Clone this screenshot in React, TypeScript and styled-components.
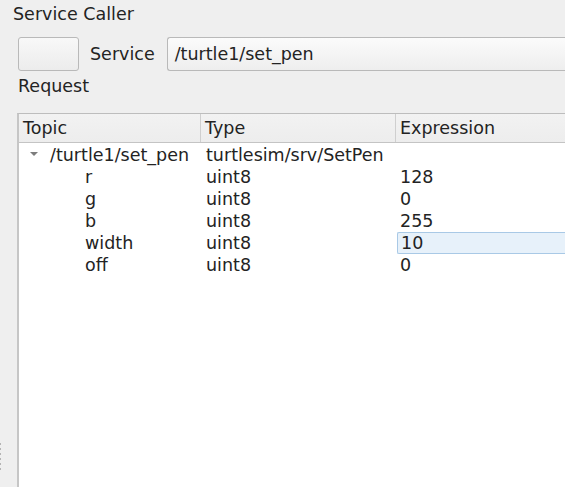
import React from "react";
import styled, {createGlobalStyle} from "styled-components";

const GlobalStyle = createGlobalStyle`
    html, body {
        margin: 0;
        padding: 0;
        background: #efefef;
        overflow: hidden;
    }
    body {
        font-family: "DejaVu Sans", "Liberation Sans", sans-serif;
        font-size: 17.5px;
        color: #232323;
    }
`;

type Row = {
    topic: string;
    type: string;
    expr: string;
    depth: number;
    editing?: boolean;
};

const rows: Row[] = [
    {topic: "/turtle1/set_pen", type: "turtlesim/srv/SetPen", expr: "", depth: 0},
    {topic: "r", type: "uint8", expr: "128", depth: 1},
    {topic: "g", type: "uint8", expr: "0", depth: 1},
    {topic: "b", type: "uint8", expr: "255", depth: 1},
    {topic: "width", type: "uint8", expr: "10", depth: 1, editing: true},
    {topic: "off", type: "uint8", expr: "0", depth: 1},
];

const App = () => {
    return (
        <>
            <GlobalStyle/>
            <Page>
                <Handle>
                    {[0, 1, 2, 3, 4, 5].map(i => <Dot key={i}/>)}
                </Handle>
                <Content>
                    <Title>Service Caller</Title>
                    <Body>
                        <ServiceRow>
                            <CallButton/>
                            <Label>Service</Label>
                            <Combo>/turtle1/set_pen</Combo>
                        </ServiceRow>
                        <Label>Request</Label>
                        <Table>
                            <Header>
                                <HeadCell>Topic</HeadCell>
                                <HeadCell>Type</HeadCell>
                                <HeadCell $last>Expression</HeadCell>
                            </Header>
                            <Rows>
                                {rows.map(r => (
                                    <TreeRow key={r.topic}>
                                        <TopicCell $depth={r.depth}>
                                            {r.depth === 0 && <Arrow/>}
                                            {r.topic}
                                        </TopicCell>
                                        <Cell>{r.type}</Cell>
                                        <ExprCell $editing={r.editing}>{r.expr}</ExprCell>
                                    </TreeRow>
                                ))}
                            </Rows>
                        </Table>
                    </Body>
                </Content>
            </Page>
        </>
    );
};

const Page = styled.div`
    display: flex;
    width: 100%;
    height: 487px;
    overflow: hidden;
`;

const Handle = styled.div`
    width: 2px;
    display: flex;
    flex-direction: column;
    gap: 3px;
    align-self: flex-end;
    margin-bottom: 17px;
`;

const Dot = styled.span`
    width: 1px;
    height: 2px;
    background: #b4b4b4;
`;

const Content = styled.div`
    flex: 1;
    display: flex;
    flex-direction: column;
    padding-left: 11px;
    min-width: 0;
`;

const Title = styled.div`
    height: 28px;
    line-height: 28px;
`;

const Body = styled.div`
    flex: 1;
    display: flex;
    flex-direction: column;
    padding-left: 4px;
    min-height: 0;
`;

const ServiceRow = styled.div`
    display: flex;
    align-items: center;
    height: 34px;
    margin-top: 9px;
    gap: 10px;
`;

const CallButton = styled.button`
    width: 61px;
    height: 34px;
    margin-left: 1px;
    border: 1px solid #b9b9b9;
    border-radius: 3px;
    background: linear-gradient(#f8f8f8, #ececec);
    padding: 0;
`;

const Label = styled.span`
    height: 30px;
    line-height: 30px;
    margin-left: 1px;
`;

const Combo = styled.div`
    flex: 1;
    height: 34px;
    box-sizing: border-box;
    line-height: 32px;
    padding-left: 7px;
    margin-left: 2px;
    border: 1px solid #b9b9b9;
    border-right: none;
    border-radius: 3px 0 0 3px;
    background: linear-gradient(#fbfbfb, #eeeeee);
`;

const Table = styled.div`
    flex: 1;
    margin-top: 12px;
    border-top: 1px solid #bdbdbd;
    border-left: 2px solid #c6c6c6;
    background: #fff;
    display: flex;
    flex-direction: column;
`;

const cols = "182px 195px 1fr";

const Header = styled.div`
    display: grid;
    grid-template-columns: ${cols};
    height: 28px;
    background: linear-gradient(#f2f2f2, #ededed);
    border-bottom: 1px solid #c4c4c4;
`;

const HeadCell = styled.div<{ $last?: boolean }>`
    padding-left: 4px;
    line-height: 28px;
    border-right: ${p => p.$last ? "none" : "1px solid #cfcfcf"};
`;

const Rows = styled.div`
    padding-top: 1px;
`;

const TreeRow = styled.div`
    display: grid;
    grid-template-columns: ${cols};
    height: 22px;
    line-height: 22px;
    white-space: nowrap;
`;

const Cell = styled.div`
    padding-left: 5px;
`;

const TopicCell = styled.div<{ $depth: number }>`
    display: flex;
    align-items: center;
    padding-left: ${p => p.$depth === 0 ? 11 : 66}px;
`;

const Arrow = styled.span`
    width: 0;
    height: 0;
    border-left: 4px solid transparent;
    border-right: 4px solid transparent;
    border-top: 4px solid #7d7d7d;
    margin-right: 12px;
    margin-top: -3px;
`;

const ExprCell = styled.div<{ $editing?: boolean }>`
    padding-left: ${p => p.$editing ? 3 : 4}px;
    margin-left: ${p => p.$editing ? 1 : 0}px;
    box-sizing: border-box;
    border: ${p => p.$editing ? "1px solid #a9c9e6" : "none"};
    border-right: none;
    border-radius: 2px 0 0 2px;
    background: ${p => p.$editing ? "#e7f1fa" : "transparent"};
    line-height: ${p => p.$editing ? 20 : 22}px;
`;

export default App;
